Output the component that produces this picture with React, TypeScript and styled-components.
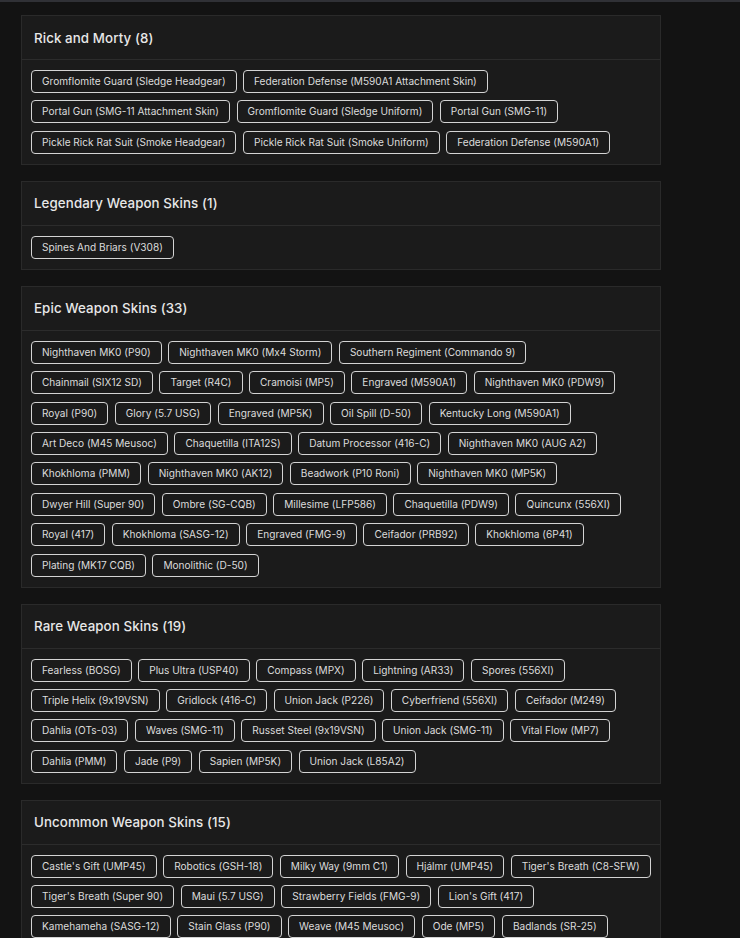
import React from "react";
import styled, { createGlobalStyle } from "styled-components";

const GlobalStyle = createGlobalStyle`
  html, body {
    margin: 0;
    padding: 0;
    background-color: #131313;
  }
  body {
    font-family: "Inter", "Noto Sans", sans-serif;
    font-feature-settings: "calt" 0;
    color: #d9d9d9;
    overflow: hidden;
  }
`;

const Page = styled.div`
  min-height: 100vh;
  border-top: 2px solid #303136;
  padding: 13px 0 0 21px;
  box-sizing: border-box;
`;

const Column = styled.div`
  width: 640px;
  display: flex;
  flex-direction: column;
  gap: 16px;
`;

const Card = styled.section`
  background-color: #1b1b1b;
  border: 1px solid #2a2a2a;
`;

const CardHeader = styled.header`
  height: 43px;
  display: flex;
  align-items: center;
  padding: 0 12px;
  border-bottom: 1px solid #2c2c2c;
`;

const Title = styled.h2`
  margin: 0;
  font-size: 13.3px;
  font-weight: 500;
  color: #e8e8e8;
  letter-spacing: 0.1px;
`;

const CardBody = styled.div`
  padding: 10px 9px;
  display: flex;
  flex-direction: column;
  gap: 7.4px;
`;

const ChipRow = styled.div`
  display: flex;
  gap: 6.5px;
`;

const Chip = styled.span`
  display: inline-block;
  height: 23px;
  box-sizing: border-box;
  padding: 0 10px;
  border: 1px solid #d4d4d4;
  border-radius: 4px;
  font-size: 10.1px;
  line-height: 21px;
  color: #dcdcdc;
  white-space: nowrap;
`;

type Group = { title: string; rows: string[][] };

const groups: Group[] = [
  {
    title: "Rick and Morty (8)",
    rows: [
      ["Gromflomite Guard (Sledge Headgear)", "Federation Defense (M590A1 Attachment Skin)"],
      ["Portal Gun (SMG-11 Attachment Skin)", "Gromflomite Guard (Sledge Uniform)", "Portal Gun (SMG-11)"],
      ["Pickle Rick Rat Suit (Smoke Headgear)", "Pickle Rick Rat Suit (Smoke Uniform)", "Federation Defense (M590A1)"],
    ],
  },
  {
    title: "Legendary Weapon Skins (1)",
    rows: [["Spines And Briars (V308)"]],
  },
  {
    title: "Epic Weapon Skins (33)",
    rows: [
      ["Nighthaven MK0 (P90)", "Nighthaven MK0 (Mx4 Storm)", "Southern Regiment (Commando 9)"],
      ["Chainmail (SIX12 SD)", "Target (R4C)", "Cramoisi (MP5)", "Engraved (M590A1)", "Nighthaven MK0 (PDW9)"],
      ["Royal (P90)", "Glory (5.7 USG)", "Engraved (MP5K)", "Oil Spill (D-50)", "Kentucky Long (M590A1)"],
      ["Art Deco (M45 Meusoc)", "Chaquetilla (ITA12S)", "Datum Processor (416-C)", "Nighthaven MK0 (AUG A2)"],
      ["Khokhloma (PMM)", "Nighthaven MK0 (AK12)", "Beadwork (P10 Roni)", "Nighthaven MK0 (MP5K)"],
      ["Dwyer Hill (Super 90)", "Ombre (SG-CQB)", "Millesime (LFP586)", "Chaquetilla (PDW9)", "Quincunx (556XI)"],
      ["Royal (417)", "Khokhloma (SASG-12)", "Engraved (FMG-9)", "Ceifador (PRB92)", "Khokhloma (6P41)"],
      ["Plating (MK17 CQB)", "Monolithic (D-50)"],
    ],
  },
  {
    title: "Rare Weapon Skins (19)",
    rows: [
      ["Fearless (BOSG)", "Plus Ultra (USP40)", "Compass (MPX)", "Lightning (AR33)", "Spores (556XI)"],
      ["Triple Helix (9x19VSN)", "Gridlock (416-C)", "Union Jack (P226)", "Cyberfriend (556XI)", "Ceifador (M249)"],
      ["Dahlia (OTs-03)", "Waves (SMG-11)", "Russet Steel (9x19VSN)", "Union Jack (SMG-11)", "Vital Flow (MP7)"],
      ["Dahlia (PMM)", "Jade (P9)", "Sapien (MP5K)", "Union Jack (L85A2)"],
    ],
  },
  {
    title: "Uncommon Weapon Skins (15)",
    rows: [
      ["Castle's Gift (UMP45)", "Robotics (GSH-18)", "Milky Way (9mm C1)", "Hjálmr (UMP45)", "Tiger's Breath (C8-SFW)"],
      ["Tiger's Breath (Super 90)", "Maui (5.7 USG)", "Strawberry Fields (FMG-9)", "Lion's Gift (417)"],
      ["Kamehameha (SASG-12)", "Stain Glass (P90)", "Weave (M45 Meusoc)", "Ode (MP5)", "Badlands (SR-25)"],
    ],
  },
];

const App: React.FC = () => {
  return (
    <>
      <GlobalStyle />
      <Page>
        <Column>
          {groups.map((group) => (
            <Card key={group.title}>
              <CardHeader>
                <Title>{group.title}</Title>
              </CardHeader>
              <CardBody>
                {group.rows.map((row, i) => (
                  <ChipRow key={i}>
                    {row.map((name) => (
                      <Chip key={name}>{name}</Chip>
                    ))}
                  </ChipRow>
                ))}
              </CardBody>
            </Card>
          ))}
        </Column>
      </Page>
    </>
  );
};

export default App;
